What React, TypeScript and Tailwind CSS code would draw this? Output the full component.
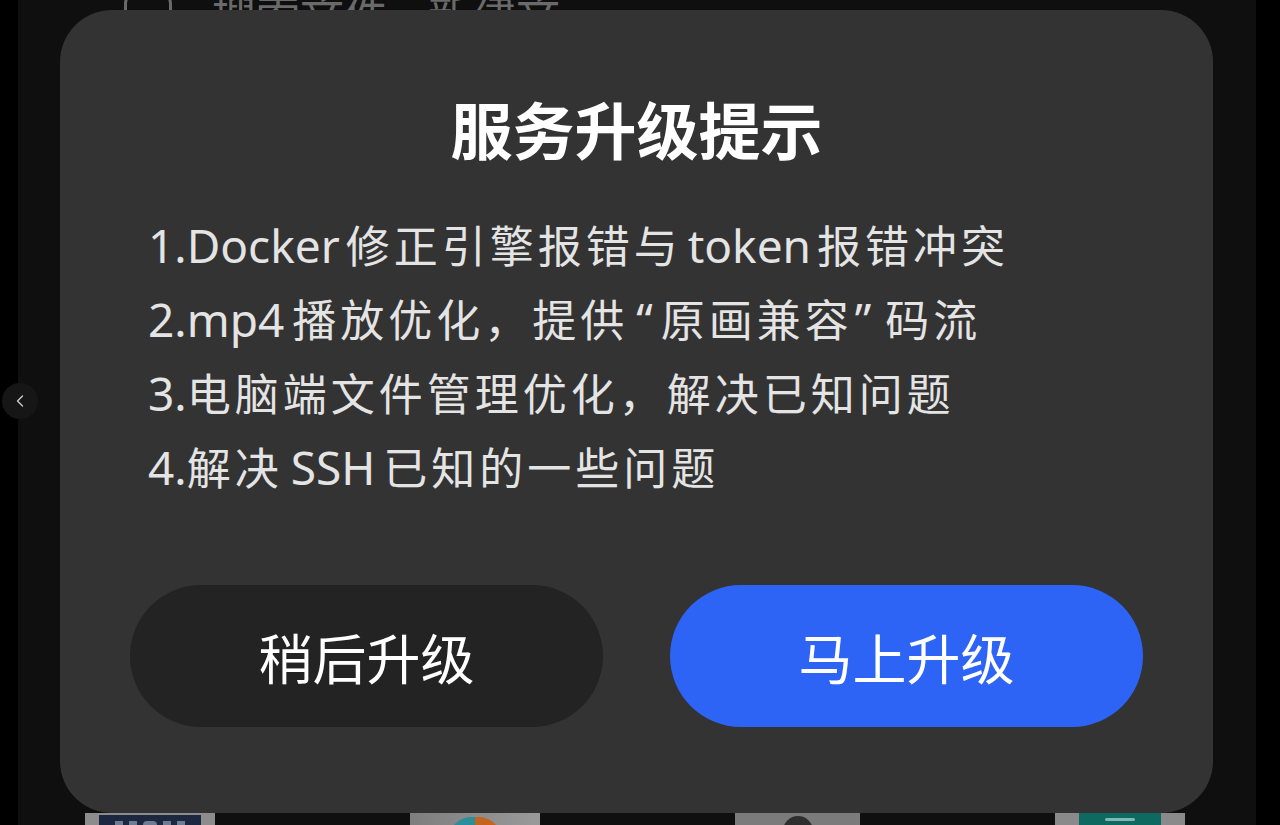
import type { ReactNode } from "react";
import { ChevronLeft } from "lucide-react";

const FONT = { fontFamily: '"Noto Sans CJK SC", "Noto Sans", sans-serif' };
const LATIN = { fontFamily: '"Noto Sans", "Noto Sans CJK SC", sans-serif' };

// latin runs: no extra tracking, slightly larger like the system font in the shot
function L({ children, className = "" }: { children: ReactNode; className?: string }) {
  return (
    <span className={`text-[46px] leading-none tracking-normal ${className}`} style={LATIN}>
      {children}
    </span>
  );
}

const items: ReactNode[] = [
  <>
    <L className="mr-[6px]">1.Docker</L>修正引擎报错与<L className="mx-[6px]">token</L>报错冲突
  </>,
  <>
    <L className="mr-[8px]">2.mp4</L>播放优化，提供<L className="ml-[8px] mr-[8px]">“</L>原画兼容<L className="ml-[2px] mr-[14px]">”</L>码流
  </>,
  <>
    <L>3.</L>电脑端文件管理优化，解决已知问题
  </>,
  <>
    <L>4.</L>解决<L className="mx-[8px]">SSH</L>已知的一些问题
  </>,
];

function Thumbs() {
  return (
    <div className="flex h-[12px] gap-[195px] overflow-hidden pl-[67px]">
      <div className="flex w-[130px] shrink-0 bg-[#8d8d8d] px-[14px] pt-[2px]">
        <div className="flex h-[20px] flex-1 items-center justify-center gap-[6px] bg-[#1b2840]">
          <span className="h-[8px] w-[8px] bg-[#6f7c95]" />
          <span className="h-[8px] w-[8px] bg-[#6f7c95]" />
          <span className="h-[8px] w-[14px] rounded-full bg-[#6f7c95]" />
          <span className="h-[8px] w-[8px] bg-[#6f7c95]" />
          <span className="h-[8px] w-[8px] bg-[#6f7c95]" />
        </div>
      </div>
      <div className="flex w-[130px] shrink-0 justify-center bg-gradient-to-r from-[#7e7e7e] to-[#9a9a9a] pt-[4px]">
        <div className="flex h-[44px] w-[52px] overflow-hidden rounded-full">
          <span className="flex-1 bg-[#2a8f9a]" />
          <span className="flex-1 bg-[#c4641f]" />
        </div>
      </div>
      <div className="flex w-[125px] shrink-0 justify-center bg-[#7b7b7b] pt-[3px]">
        <div className="h-[30px] w-[30px] rounded-full bg-[#2e2e2e]" />
      </div>
      <div className="flex w-[130px] shrink-0 justify-center bg-[#8a8a8a]">
        <div className="flex h-[20px] w-[82px] justify-center bg-[#0e6a60] pt-[5px]">
          <span className="h-[3px] w-[30px] rounded bg-[#7fb9b1]" />
        </div>
      </div>
    </div>
  );
}

export default function App() {
  return (
    <div className="relative flex h-[825px] w-[1280px] overflow-hidden bg-black" style={FONT}>
      <div className="w-[18px] shrink-0 bg-black" />
      <div className="flex flex-1 flex-col bg-[#0f0f0f]">
        <div className="flex h-[12px] items-end overflow-visible pl-[106px]">
          <div className="flex shrink-0 items-center gap-[40px] text-[44px] leading-[50px] text-[#6a6a6a] -mb-[26px]">
            <span className="h-[46px] w-[48px] rounded-[14px] border-[3px] border-[#6a6a6a]" />
            <span>搜索文件</span>
            <span>新建文</span>
          </div>
        </div>
        <div className="flex-1" />
        <Thumbs />
      </div>
      <div className="w-[24px] shrink-0 bg-black" />

      <button
        type="button"
        className="absolute left-[2px] top-[383px] flex h-[36px] w-[36px] items-center justify-center rounded-full bg-[#161616] text-[#d0d0d0]"
        aria-label="上一页"
      >
        <ChevronLeft size={20} strokeWidth={1.5} />
      </button>

      <div className="absolute left-[60px] top-[10px] flex h-[803px] w-[1153px] flex-col rounded-[52px] bg-[#333333] px-[70px] pt-[82px]">
        <h1 className="text-center text-[62px] font-bold leading-[72px] text-white">
          服务升级提示
        </h1>
        <ul className="mt-[43px] flex flex-col pl-[18px]">
          {items.map((t, i) => (
            <li key={i} className="h-[74px] text-[44px] leading-[74px] tracking-[4px] text-[#e4e4e4]">
              {t}
            </li>
          ))}
        </ul>
        <div className="mt-[82px] flex gap-[67px]">
          <button
            type="button"
            className="flex h-[142px] flex-1 items-center justify-center rounded-full bg-[#232323] text-[54px] text-white"
          >
            稍后升级
          </button>
          <button
            type="button"
            className="flex h-[142px] flex-1 items-center justify-center rounded-full bg-[#2e64f6] text-[54px] text-white"
          >
            马上升级
          </button>
        </div>
      </div>
    </div>
  );
}
